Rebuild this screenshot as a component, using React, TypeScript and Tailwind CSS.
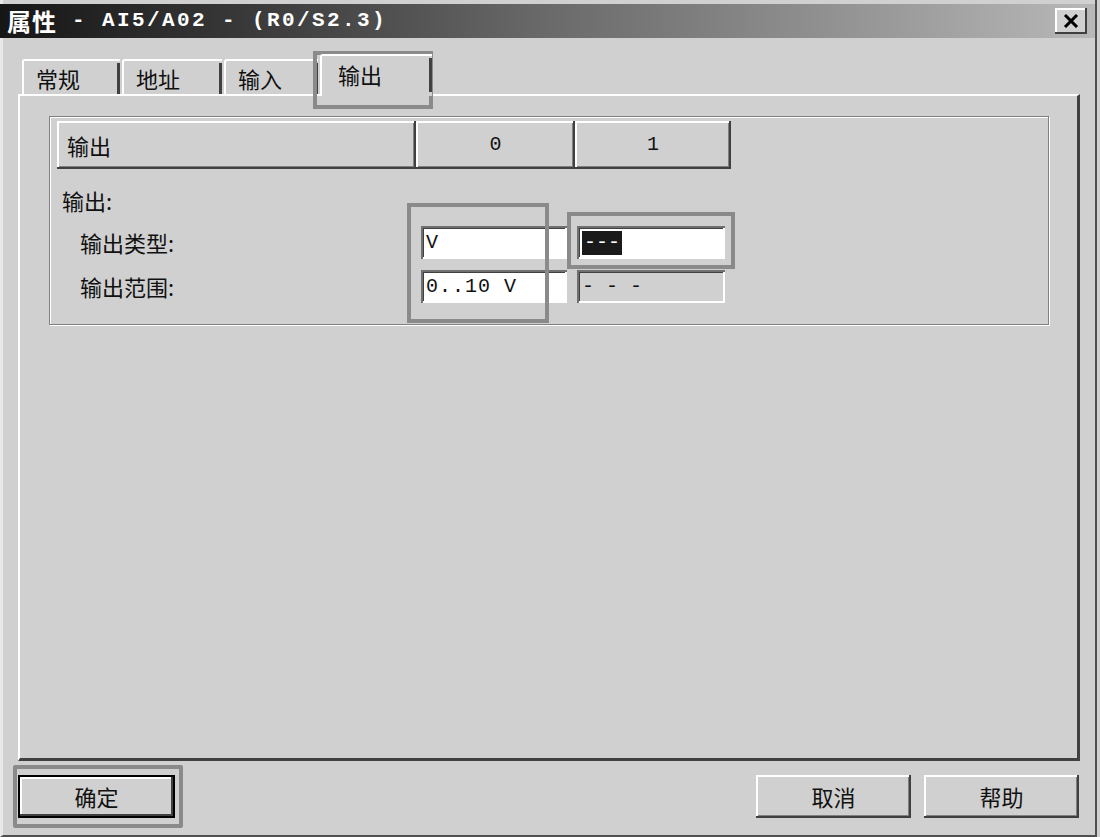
import React from "react";

const CJK = { fontFamily: '"Noto Sans CJK SC", "Noto Sans", sans-serif' };
const MONO = { fontFamily: '"Liberation Mono", "Noto Sans CJK SC", monospace' };

const raised =
  "bg-[#d0d0d0] shadow-[inset_-2px_-2px_#404040,inset_2px_2px_#ffffff,inset_-3px_-3px_#808080]";
const sunken =
  "shadow-[inset_2px_2px_#707070,inset_-2px_-2px_#ffffff,inset_3px_3px_#404040]";

function Tab({ label, active, w }: { label: string; active?: boolean; w: string }) {
  if (active) {
    return (
      <div
        className={`${w} h-[42px] -mb-[2px] relative z-10 bg-[#d0d0d0] border-l-2 border-t-2 border-white rounded-tl-[3px] flex items-start pl-[16px] pt-[2px] text-[22px] text-[#111]`}
        style={CJK}
      >
        输出
        <div className="absolute right-0 top-[2px] bottom-[4px] w-[3px] bg-[#404040]" />
      </div>
    );
  }
  return (
    <div
      className={`${w} h-[35px] bg-[#d0d0d0] border-l-2 border-t-2 border-white rounded-tl-[3px] relative flex items-center pl-[12px] pt-[2px] text-[22px] text-[#111]`}
      style={CJK}
    >
      {label}
      <div className="absolute right-0 top-[2px] bottom-0 w-[3px] bg-[#404040]" />
    </div>
  );
}

function Btn({ label, w, bold }: { label: string; w: string; bold?: boolean }) {
  return (
    <div
      className={`${w} h-[43px] flex items-center justify-center text-[22px] text-[#111] ${
        bold
          ? "border-2 border-black bg-[#d0d0d0] shadow-[inset_-2px_-2px_#404040,inset_2px_2px_#ffffff]"
          : raised
      }`}
      style={CJK}
    >
      {label}
    </div>
  );
}

export default function App() {
  return (
    <div className="w-[1100px] h-[837px] bg-[#d0d0d0] overflow-hidden relative">
      <div className="w-[1097px] h-[837px] border-l-[3px] border-l-[#e8e8e8] border-r-[2px] border-r-[#505050] border-b-[2px] border-b-[#505050] flex flex-col pt-[4px]">
        {/* Title bar */}
        <div className="h-[34px] -ml-[3px] bg-gradient-to-r from-[#161616] via-[#6a6a6a] to-[#b8b8b8] flex items-center pl-[7px] pr-[8px]">
          <div className="flex items-center text-white font-bold text-[23px] whitespace-pre" style={MONO}>
            <span className="text-[24px] tracking-[1px]" style={CJK}>属性</span>
            <span className="text-[21px] tracking-[2.4px]">{" - AI5/A02 - (R0/S2.3)"}</span>
          </div>
          <div className="ml-auto w-[32px] h-[26px] bg-[#d0d0d0] shadow-[inset_-2px_-2px_#404040,inset_2px_2px_#ffffff] flex items-center justify-center">
            <svg width="16" height="14" viewBox="0 0 16 14">
              <path d="M2 1 L14 13 M14 1 L2 13" stroke="#000" strokeWidth="3" />
            </svg>
          </div>
        </div>

        {/* Tabs */}
        <div className="flex items-end pl-[19px] mt-[16px] gap-[2px]">
          <Tab label="常规" w="w-[98px]" />
          <Tab label="地址" w="w-[100px]" />
          <Tab label="输入" w="w-[94px]" />
          <Tab label="输出" w="w-[112px]" active />
        </div>

        {/* Panel */}
        <div className="ml-[15px] w-[1062px] h-[667px] border-l-2 border-t-2 border-white border-r-[3px] border-r-[#404040] border-b-[3px] border-b-[#404040] relative">
          {/* Group box */}
          <div className="ml-[29px] mt-[20px] w-[1000px] h-[209px] border border-[#808080] shadow-[1px_1px_#ffffff,inset_1px_1px_#ffffff] px-[7px] pt-[4px] relative">
            {/* header */}
            <div className="flex">
              <div className={`w-[359px] h-[48px] ${raised} flex items-center pl-[10px] text-[22px] text-[#111]`} style={CJK}>
                输出
              </div>
              <div className={`w-[159px] h-[48px] ${raised} flex items-center justify-center text-[20px] text-[#111]`} style={MONO}>
                0
              </div>
              <div className={`w-[156px] h-[48px] ${raised} flex items-center justify-center text-[20px] text-[#111]`} style={MONO}>
                1
              </div>
            </div>
            <div className="mt-[18px] pl-[5px] text-[22px] leading-[26px] text-[#111]" style={CJK}>
              输出:
            </div>
            <div className="flex items-center mt-[13px]">
              <div className="w-[364px] pl-[23px] text-[22px] text-[#111]" style={CJK}>
                输出类型:
              </div>
              <div className={`w-[146px] h-[33px] bg-white ${sunken} flex items-center pl-[5px] text-[20px] text-[#111]`} style={MONO}>
                V
              </div>
              <div className={`ml-[10px] w-[148px] h-[33px] bg-white ${sunken} flex items-center pl-[5px]`}>
                <span className="bg-[#1a1a1a] text-white text-[20px] leading-[24px] px-[2px]" style={MONO}>
                  ---
                </span>
              </div>
            </div>
            <div className="flex items-center mt-[11px]">
              <div className="w-[364px] pl-[23px] text-[22px] text-[#111]" style={CJK}>
                输出范围:
              </div>
              <div className={`w-[146px] h-[33px] bg-white ${sunken} flex items-center pl-[5px] text-[20px] tracking-[1px] text-[#111] whitespace-pre`} style={MONO}>
                0..10 V
              </div>
              <div className={`ml-[10px] w-[148px] h-[33px] bg-[#d0d0d0] ${sunken} flex items-center pl-[5px] text-[20px] text-[#111] whitespace-pre`} style={MONO}>
                - - -
              </div>
            </div>

            {/* annotation boxes */}
            <div className="absolute left-[357px] top-[86px] w-[142px] h-[120px] border-[4px] border-[#8a8a8a]" />
            <div className="absolute left-[517px] top-[95px] w-[168px] h-[57px] border-[4px] border-[#8a8a8a]" />
          </div>
        </div>

        {/* Footer */}
        <div className="flex items-center mt-[14px] pl-[15px] pr-[16px]">
          <Btn label="确定" w="w-[157px]" bold />
          <div className="ml-auto flex gap-[13px]">
            <Btn label="取消" w="w-[155px]" />
            <Btn label="帮助" w="w-[155px]" />
          </div>
        </div>
      </div>

      {/* annotation around active tab */}
      <div className="absolute left-[313px] top-[51px] w-[120px] h-[58px] border-[4px] border-[#8a8a8a] pointer-events-none" />
      {/* annotation around OK button */}
      <div className="absolute left-[13px] top-[765px] w-[170px] h-[63px] border-[4px] border-[#8a8a8a] rounded-[2px] pointer-events-none" />
    </div>
  );
}
